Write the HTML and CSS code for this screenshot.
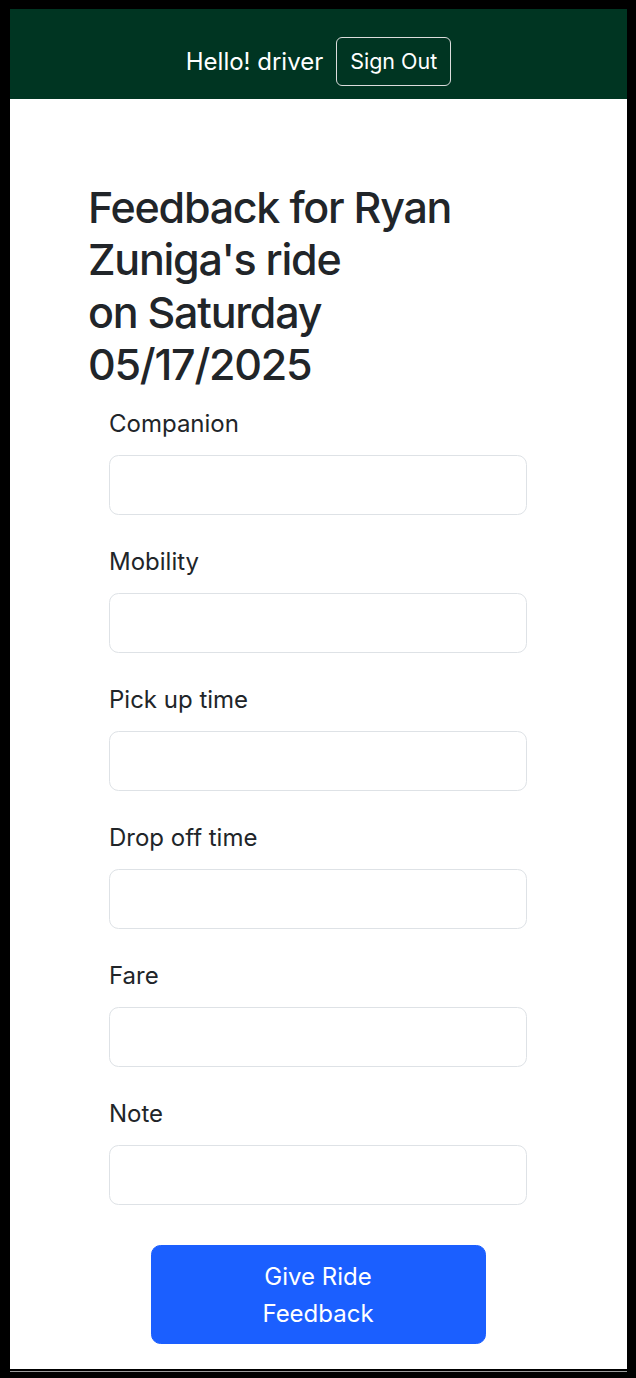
FILE: index.html
```html
<!DOCTYPE html>
<html lang="en">
<head>
<meta charset="utf-8">
<title>Ride Feedback</title>
<link rel="stylesheet" href="styles.css">
</head>
<body>
<div class="screen">
  <header class="navbar">
    <span class="greeting">Hello! driver</span>
    <button type="button" class="btn-signout">Sign Out</button>
  </header>
  <main class="content">
    <h1 class="title">Feedback for Ryan Zuniga's ride<br>on Saturday 05/17/2025</h1>
    <form class="feedback-form">
      <div class="field">
        <label class="field-label" for="companion">Companion</label>
        <input class="field-input" id="companion" type="text">
      </div>
      <div class="field">
        <label class="field-label" for="mobility">Mobility</label>
        <input class="field-input" id="mobility" type="text">
      </div>
      <div class="field">
        <label class="field-label" for="pickup">Pick up time</label>
        <input class="field-input" id="pickup" type="text">
      </div>
      <div class="field">
        <label class="field-label" for="dropoff">Drop off time</label>
        <input class="field-input" id="dropoff" type="text">
      </div>
      <div class="field">
        <label class="field-label" for="fare">Fare</label>
        <input class="field-input" id="fare" type="text">
      </div>
      <div class="field">
        <label class="field-label" for="note">Note</label>
        <input class="field-input" id="note" type="text">
      </div>
      <div class="actions">
        <button type="button" class="btn-submit">Give Ride Feedback</button>
      </div>
    </form>
  </main>
</div>
<div class="screen-edge"></div>
</body>
</html>
```

FILE: styles.css
```css
* {
  box-sizing: border-box;
}

html, body {
  margin: 0;
  padding: 0;
}

body {
  background: #000;
  padding: 9px 0 0 10px;
  font-family: Inter, "Liberation Sans", Arial, sans-serif;
  color: #212529;
}

.screen {
  width: 617px;
  height: 1360px;
  overflow: hidden;
  background: #fff;
  display: flex;
  flex-direction: column;
}

.screen-edge {
  width: 617px;
  height: 1px;
  margin-top: 2px;
  background: #9c9c9c;
}

.navbar {
  height: 90px;
  flex: none;
  background: #003522;
  display: flex;
  align-items: center;
  justify-content: center;
  padding-top: 28px;
  padding-bottom: 13px;
}

.greeting {
  color: #fff;
  font-size: 24px;
  line-height: 37.5px;
  margin-right: 13px;
}

.btn-signout {
  font-family: inherit;
  font-size: 21.5px;
  line-height: 33px;
  color: #fff;
  background: transparent;
  border: 1.5px solid #dcdcdc;
  border-radius: 6px;
  padding: 6.5px 12px;
  height: 49px;
  width: 115px;
  white-space: nowrap;
}

.content {
  padding: 82px 0 0 78px;
}

.title {
  margin: 0 0 14.5px;
  max-width: 440px;
  font-size: 43px;
  font-weight: 500;
  line-height: 52.3px;
  letter-spacing: -1.25px;
  color: #212529;
}

.feedback-form {
  width: 418px;
  margin-left: 21px;
}

.field {
  margin-bottom: 27.5px;
}

.field-label {
  display: block;
  font-size: 24px;
  line-height: 37.5px;
  margin-bottom: 13px;
  color: #212529;
}

.field-input {
  display: block;
  width: 100%;
  height: 60px;
  border: 1.5px solid #dee2e6;
  border-radius: 9.5px;
  background: #fff;
  font-family: inherit;
  font-size: 25px;
  padding: 9px 18px;
}

.actions {
  margin-top: 39.5px;
  display: flex;
  justify-content: center;
}

.btn-submit {
  width: 335px;
  height: 99px;
  padding: 12px 70px;
  font-family: inherit;
  font-size: 24px;
  line-height: 37.5px;
  color: #fff;
  background: #1b5fff;
  border: 1.5px solid #1b5fff;
  border-radius: 9.5px;
  text-align: center;
}
```
